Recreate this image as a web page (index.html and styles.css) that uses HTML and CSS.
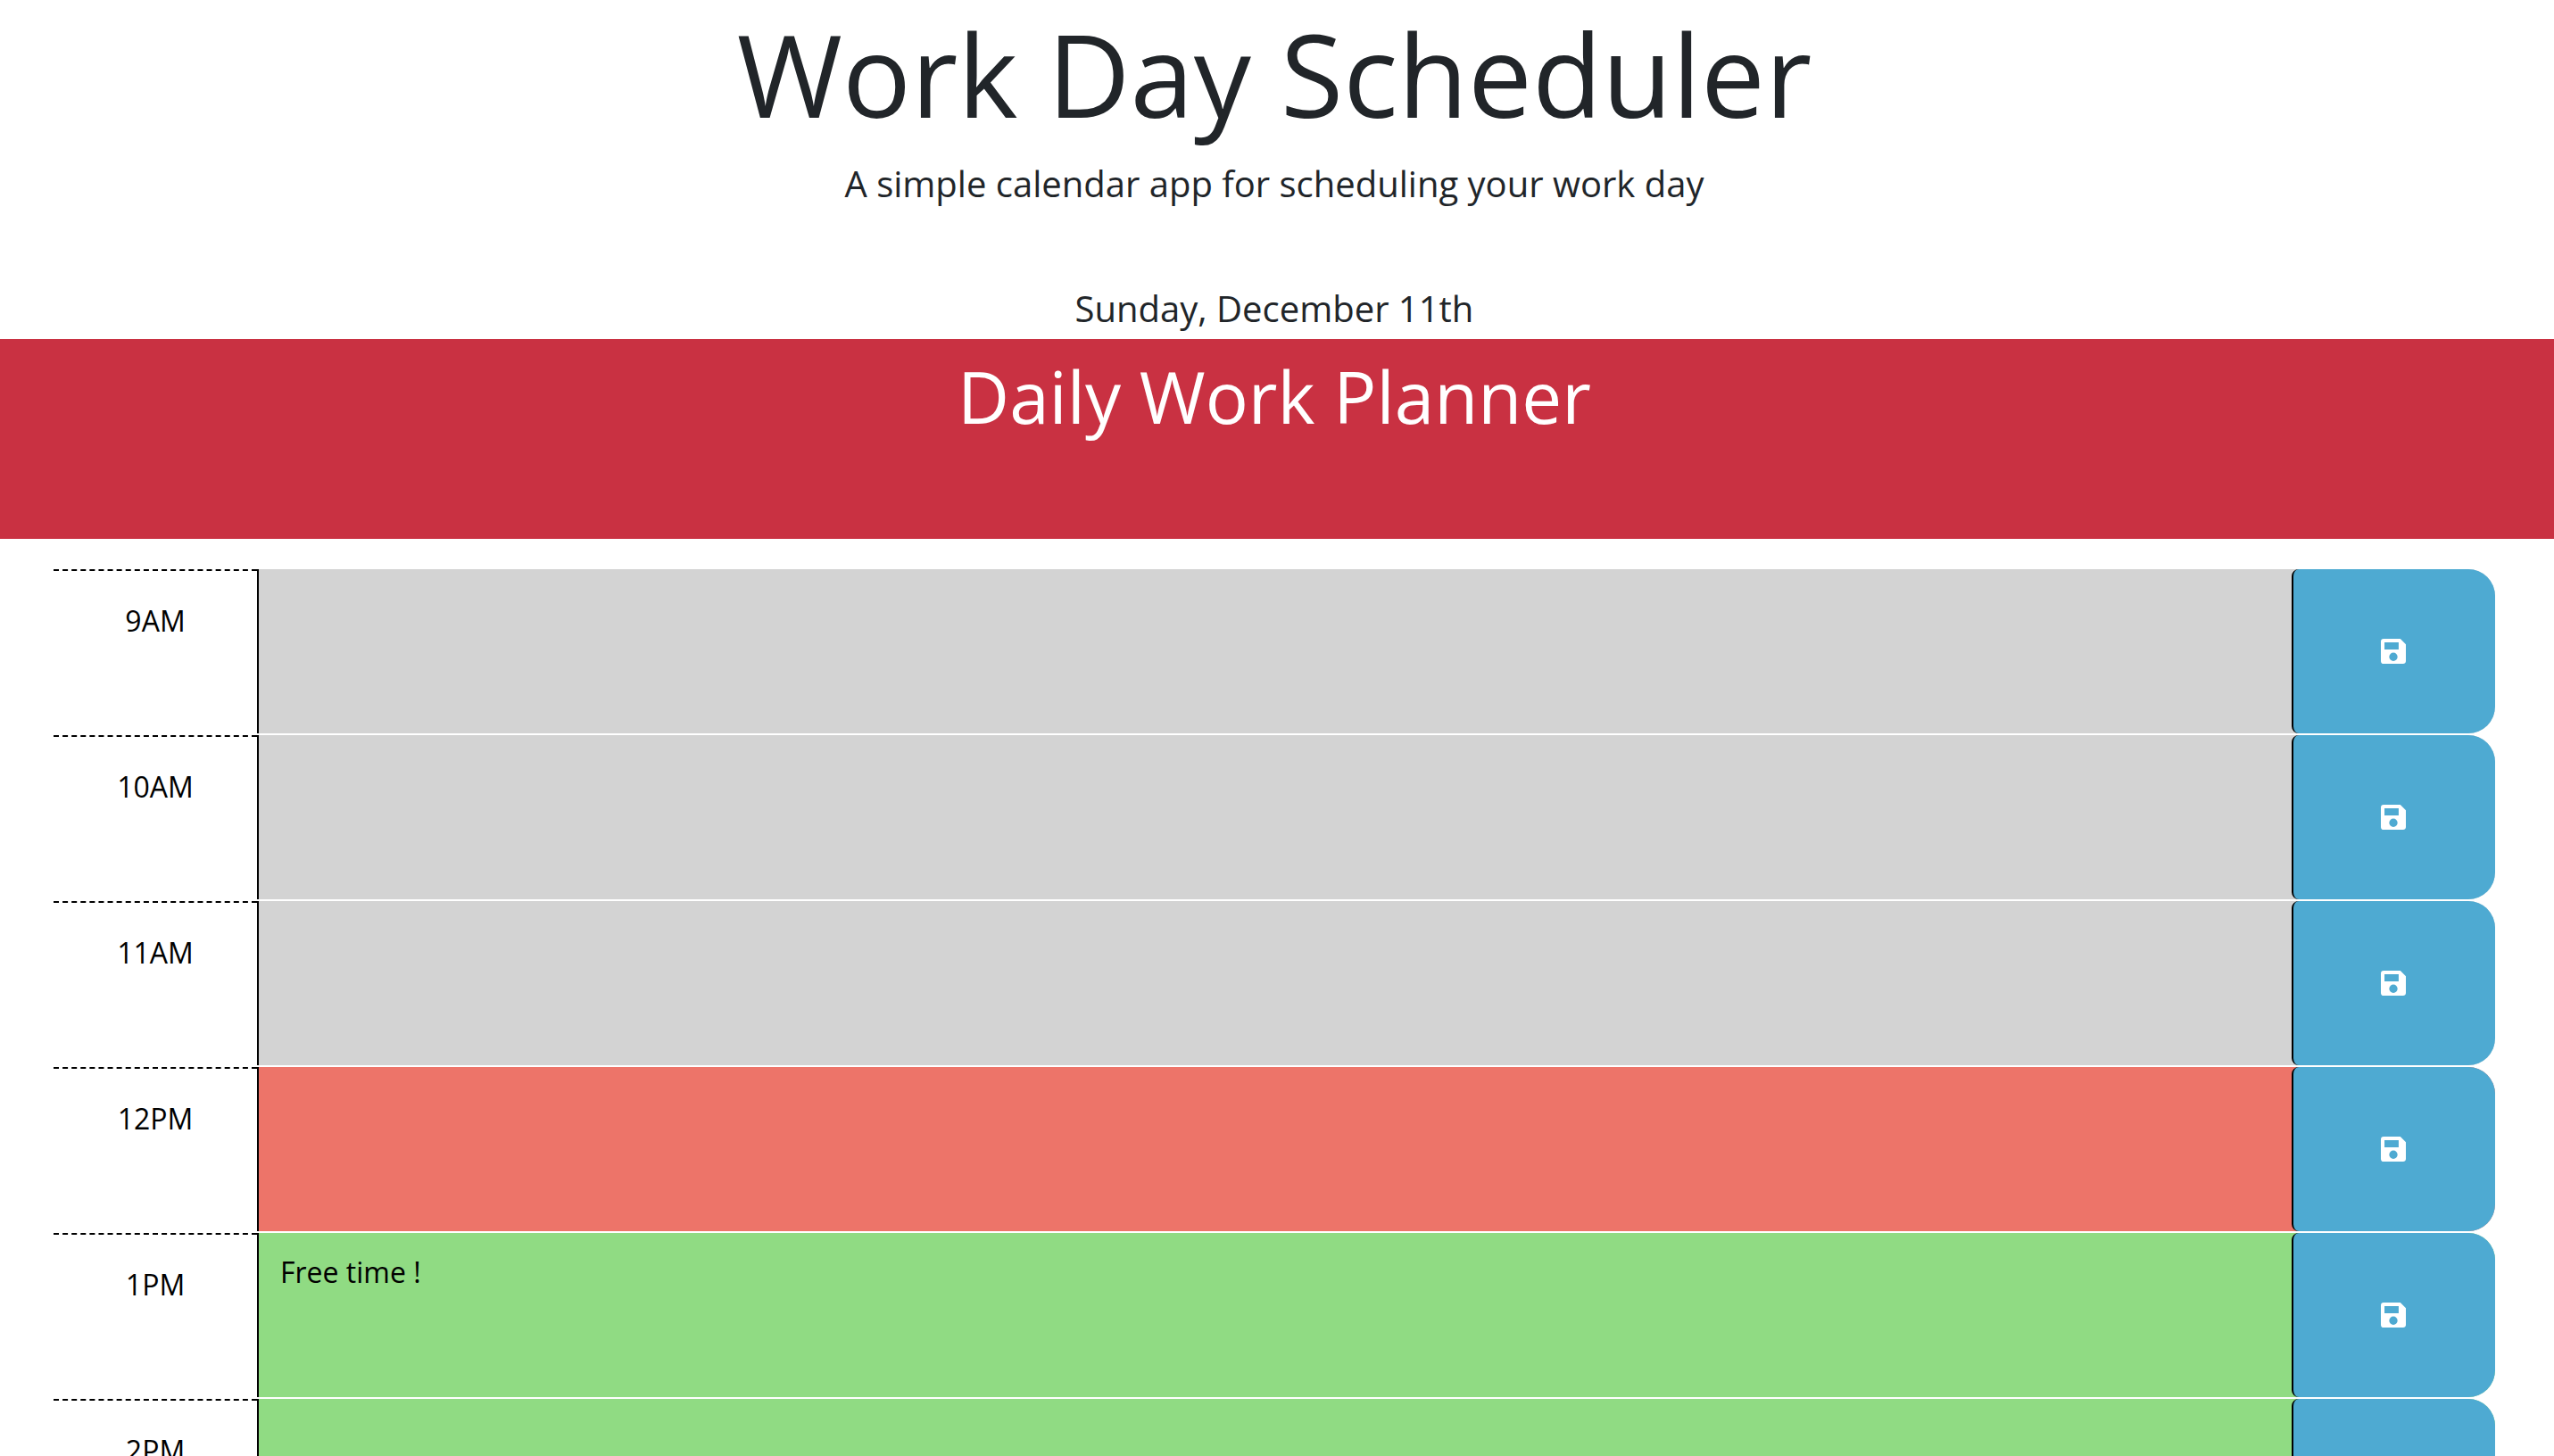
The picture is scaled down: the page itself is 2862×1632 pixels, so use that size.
FILE: index.html
```html
<!DOCTYPE html>
<html lang="en">
<head>
  <meta charset="utf-8">
  <meta name="viewport" content="width=device-width, initial-scale=1">
  <title>Work Day Scheduler</title>
  <link rel="stylesheet" href="styles.css">
</head>
<body>
  <svg class="sprite" aria-hidden="true">
    <symbol id="save" viewBox="3 3 18 18">
      <path fill-rule="evenodd" d="M17 3H5a2 2 0 0 0-2 2v14a2 2 0 0 0 2 2h14c1.1 0 2-.9 2-2V7l-4-4zM12 19a3 3 0 1 1 0-6 3 3 0 0 1 0 6zM15.800 10.700H5.600V5.600h10.200v5.100z"/>
    </symbol>
  </svg>

  <header class="intro">
    <h1 class="title">Work Day Scheduler</h1>
    <p class="lead">A simple calendar app for scheduling your work day</p>
    <p class="lead today">Sunday, December 11th</p>
  </header>

  <div class="banner">
    <h2 class="banner-title">Daily Work Planner</h2>
  </div>

  <main class="planner">
    <div class="time-block past">
      <label class="hour" for="hour-9">9AM</label>
      <textarea class="event" id="hour-9"></textarea>
      <button class="save" type="button" aria-label="Save 9AM"><svg class="icon"><use href="#save"/></svg></button>
    </div>
    <div class="time-block past">
      <label class="hour" for="hour-10">10AM</label>
      <textarea class="event" id="hour-10"></textarea>
      <button class="save" type="button" aria-label="Save 10AM"><svg class="icon"><use href="#save"/></svg></button>
    </div>
    <div class="time-block past">
      <label class="hour" for="hour-11">11AM</label>
      <textarea class="event" id="hour-11"></textarea>
      <button class="save" type="button" aria-label="Save 11AM"><svg class="icon"><use href="#save"/></svg></button>
    </div>
    <div class="time-block present">
      <label class="hour" for="hour-12">12PM</label>
      <textarea class="event" id="hour-12"></textarea>
      <button class="save" type="button" aria-label="Save 12PM"><svg class="icon"><use href="#save"/></svg></button>
    </div>
    <div class="time-block future">
      <label class="hour" for="hour-13">1PM</label>
      <textarea class="event" id="hour-13">Free time !</textarea>
      <button class="save" type="button" aria-label="Save 1PM"><svg class="icon"><use href="#save"/></svg></button>
    </div>
    <div class="time-block future">
      <label class="hour" for="hour-14">2PM</label>
      <textarea class="event" id="hour-14"></textarea>
      <button class="save" type="button" aria-label="Save 2PM"><svg class="icon"><use href="#save"/></svg></button>
    </div>
  </main>
</body>
</html>
```

FILE: styles.css
```css
* {
  box-sizing: border-box;
}

body {
  margin: 0;
  font-family: "Open Sans", sans-serif;
  font-size: 32px;
  line-height: 48px;
  color: #212529;
  background: #fff;
}

.sprite {
  display: none;
}

.intro {
  padding: 6px 6px 4px 0;
  text-align: center;
}

.title {
  margin: 0 0 16px;
  font-size: 128px;
  font-weight: 400;
  line-height: 154px;
}

.lead {
  margin: 0;
  font-size: 40px;
  line-height: 60px;
}

.today {
  margin-top: 80px;
}

.banner {
  padding: 16px 6px 112px 0;
  text-align: center;
  color: #fff;
  background: #c93142;
}

.banner-title {
  margin: 0;
  font-size: 80px;
  font-weight: 400;
  line-height: 96px;
}

.planner {
  display: flex;
  flex-direction: column;
  gap: 2px;
  padding: 34px 66px 0 60px;
}

.time-block {
  display: grid;
  grid-template-columns: 1fr 10fr 1fr;
  height: 184px;
  border-radius: 0 30px 30px 0;
}

.hour {
  padding-top: 32px;
  border-top: 2px dashed #000;
  text-align: center;
  color: #000;
  background: #fff;
}

.event {
  width: 100%;
  height: 100%;
  padding: 20px 24px;
  border: 0;
  border-left: 2px solid #000;
  font: inherit;
  color: #000;
  background: transparent;
  resize: none;
}

.past {
  background: #d3d3d3;
}

.present {
  background: #ed7469;
}

.future {
  background: #90db83;
}

.save {
  display: flex;
  align-items: center;
  justify-content: center;
  padding: 0 2px 0 0;
  border: 0;
  border-left: 2px solid #000;
  border-radius: 8px 30px 30px 8px;
  color: #fff;
  background: #4eaad2;
}

.icon {
  width: 28px;
  height: 28px;
  fill: currentColor;
}
```
